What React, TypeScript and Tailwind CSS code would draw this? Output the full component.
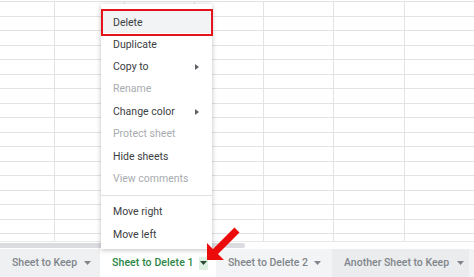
import React from "react";

const colW = [55, 70, 70, 69, 70, 71, 70];
const rows = Array.from({ length: 17 });

const menuItems: { label: string; disabled?: boolean; sub?: boolean; sep?: boolean }[] = [
  { label: "Duplicate" },
  { label: "Copy to", sub: true },
  { label: "Rename", disabled: true },
  { label: "Change color", sub: true },
  { label: "Protect sheet", disabled: true },
  { label: "Hide sheets" },
  { label: "View comments", disabled: true },
  { label: "", sep: true },
  { label: "Move right" },
  { label: "Move left" },
];

function Caret({ className = "" }: { className?: string }) {
  return (
    <svg width="7" height="4" viewBox="0 0 7 4" className={`shrink-0 ${className}`}>
      <path d="M0 0h7L3.5 4z" fill="currentColor" />
    </svg>
  );
}

function SubArrow() {
  return (
    <svg width="4" height="6" viewBox="0 0 4 6" className="text-[#5f6368]">
      <path d="M0 0l4 3-4 3z" fill="currentColor" />
    </svg>
  );
}

function Tab({ label, className = "" }: { label: string; className?: string }) {
  return (
    <div className={`flex h-full items-center justify-between whitespace-nowrap pl-3 ${className}`}>
      <span className="text-[10.5px] font-medium text-[#80868b]">{label}</span>
      <Caret className="text-[#80868b]" />
    </div>
  );
}

export default function App() {
  return (
    <div className="relative h-[277px] w-[474px] overflow-hidden bg-white font-['Roboto',sans-serif]">
      {/* sheet grid */}
      <div className="h-[241px] overflow-hidden pt-px">
        {rows.map((_, r) => (
          <div key={r} className="flex h-[14.5px] border-t border-[#e3e3e3]">
            {colW.map((w, c) => (
              <div key={c} className="h-full shrink-0 border-r border-[#e3e3e3]" style={{ width: w }} />
            ))}
          </div>
        ))}
      </div>

      {/* horizontal scrollbar */}
      <div className="flex h-[8px] items-start border-t border-[#e8e8e8] pt-px">
        <div className="h-[5px] w-[245px] rounded-r-full bg-[#dadce0]" />
      </div>

      {/* sheet tabs */}
      <div className="flex h-[28px] bg-[#f1f3f4]">
        <Tab label="Sheet to Keep" className="w-[100px] bg-[#eef0f1] pr-[9px]" />
        <div className="flex h-full w-[116px] items-center whitespace-nowrap bg-white pl-3 pr-2">
          <span className="text-[10.5px] font-medium tracking-[0.1px] text-[#2a8645]">Sheet to Delete 1</span>
          <span className="ml-[5px] flex h-[13px] w-[10px] items-center justify-center bg-[#ddf0e2]">
            <Caret className="text-[#2d4a35]" />
          </span>
        </div>
        <Tab label="Sheet to Delete 2" className="w-[116px] bg-[#f3f4f5] pr-[11px]" />
        <Tab label="Another Sheet to Keep" className="w-[137px] bg-[#eaecee] pr-[5px]" />
      </div>

      {/* context menu */}
      <div className="absolute left-[101px] top-[4px] h-[245px] w-[111px] bg-white pt-[7px] shadow-[0_1px_5px_rgba(0,0,0,0.25)]">
        <div className="relative flex h-[22.4px] items-center bg-[#f1f3f4] pl-3 pt-[2px] text-[10.5px] text-[#3c4043]">
          Delete
          <span className="absolute -bottom-[3px] -right-px -top-[2px] left-0 border-2 border-[#e3141c]" />
        </div>
        {menuItems.map((it, i) =>
          it.sep ? (
            <div key={i} className="flex h-[11px] items-center">
              <div className="h-px w-full bg-[#e0e0e0]" />
            </div>
          ) : (
            <div
              key={i}
              className={`flex h-[22.4px] items-center justify-between pl-3 pr-[13px] text-[10.5px] ${
                it.disabled ? "text-[#a8acb0]" : "text-[#3c4043]"
              }`}
            >
              <span>{it.label}</span>
              {it.sub && <SubArrow />}
            </div>
          )
        )}
      </div>

      {/* red pointer arrow */}
      <svg className="pointer-events-none absolute left-0 top-0" width="474" height="277">
        <polygon
          points="207,260 207,243 213,249 234.5,227.5 239.5,232.5 218,254 224,260"
          fill="#ec0b0b"
        />
      </svg>
    </div>
  );
}
